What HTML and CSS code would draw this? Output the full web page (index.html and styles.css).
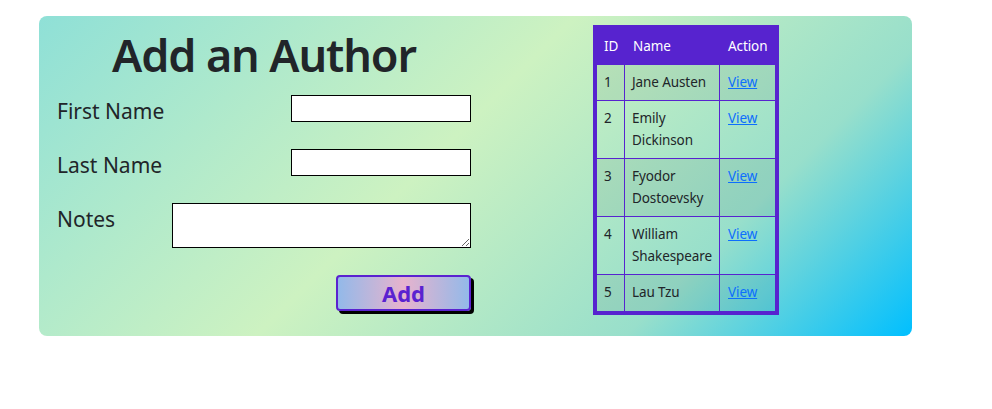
FILE: index.html
```html
<!DOCTYPE html>
<html lang="en">
<head>
<meta charset="utf-8">
<title>Add an Author</title>
<link rel="stylesheet" href="styles.css">
</head>
<body>
<div class="panel">
  <form class="author-form">
    <h1 class="title">Add an Author</h1>
    <div class="row">
      <label class="label" for="first">First Name</label>
      <input class="field" id="first" type="text">
    </div>
    <div class="row">
      <label class="label" for="last">Last Name</label>
      <input class="field" id="last" type="text">
    </div>
    <div class="row">
      <label class="label" for="notes">Notes</label>
      <textarea class="notes" id="notes"></textarea>
    </div>
    <div class="actions">
      <button class="add-btn" type="button">Add</button>
    </div>
  </form>
  <div class="table-wrap">
    <table class="authors">
      <thead>
        <tr><th class="c-id">ID</th><th class="c-name">Name</th><th class="c-act">Action</th></tr>
      </thead>
      <tbody>
        <tr class="odd"><td>1</td><td>Jane Austen</td><td><a href="#">View</a></td></tr>
        <tr><td>2</td><td>Emily Dickinson</td><td><a href="#">View</a></td></tr>
        <tr class="odd"><td>3</td><td>Fyodor Dostoevsky</td><td><a href="#">View</a></td></tr>
        <tr><td>4</td><td>William Shakespeare</td><td><a href="#">View</a></td></tr>
        <tr class="odd last"><td>5</td><td>Lau Tzu</td><td><a href="#">View</a></td></tr>
      </tbody>
    </table>
  </div>
</div>
</body>
</html>
```
FILE: styles.css
```css
html, body {
  margin: 0;
  padding: 0;
  background: #ffffff;
}
body {
  font-family: "Noto Sans", "Open Sans", sans-serif;
  color: #212529;
}
.panel {
  display: flex;
  align-items: flex-start;
  box-sizing: border-box;
  width: 873px;
  height: 320px;
  margin: 16px 0 0 39px;
  border-radius: 8px;
  background: linear-gradient(135deg, #8fe0d7 0%, #cdf2c1 45%, #98dfcb 76%, #00bfff 100%);
}
.author-form {
  width: 414px;
  margin-left: 18px;
  padding-top: 10px;
}
.title {
  margin: 0 0 12px 0;
  font-size: 45px;
  line-height: 57px;
  font-weight: 600;
  letter-spacing: -1.1px;
  text-align: center;
  color: #212529;
}
.row {
  display: flex;
  align-items: flex-start;
  justify-content: space-between;
  margin-bottom: 22px;
}
.label {
  font-size: 21px;
  line-height: 32px;
  color: #212529;
}
.field {
  box-sizing: border-box;
  width: 180px;
  height: 27px;
  margin: 0;
  border: 1px solid #000;
  border-radius: 0;
  background: #fff;
}
.notes {
  box-sizing: border-box;
  width: 299px;
  height: 45px;
  margin: 0;
  border: 1px solid #000;
  border-radius: 0;
  background: #fff;
  resize: both;
}
.actions {
  display: flex;
  justify-content: flex-end;
  margin-top: 27px;
}
.add-btn {
  box-sizing: border-box;
  width: 135px;
  height: 36px;
  padding: 0;
  border: 2px solid #5a22d0;
  border-radius: 4px;
  background: linear-gradient(90deg, #93b9e9 0%, #e7b3cd 50%, #93b9e9 100%);
  box-shadow: 3px 3px 0 #000;
  font-family: "Noto Sans", sans-serif;
  font-size: 22px;
  font-weight: 700;
  color: #5a22d0;
  line-height: 1;
}
.table-wrap {
  margin-left: 122px;
  margin-top: 9px;
}
.authors {
  box-sizing: border-box;
  border-collapse: separate;
  border-spacing: 0;
  table-layout: fixed;
  width: 186px;
  border: 4px solid #5723cf;
  font-size: 13.5px;
  line-height: 21.5px;
  letter-spacing: -0.1px;
}
.authors th {
  box-sizing: border-box;
  background: #5723cf;
  color: #ffffff;
  font-weight: 400;
  text-align: left;
  padding: 7px 4px 7px 7px;
}
.c-id { width: 28px; }
.c-name { width: 95px; }
.c-act { width: 55px; }
.authors th.c-name { padding-left: 8px; }
.authors th.c-act { padding-left: 8px; }
.authors td {
  padding: 7px 3px 7px 7px;
  vertical-align: top;
  border-right: 1px solid #5723cf;
  border-bottom: 1px solid #5723cf;
  color: #212529;
}
.authors td:last-child {
  border-right: 0;
  padding-left: 8px;
}
.authors tr.last td {
  border-bottom: 0;
}
.authors tr.odd td {
  background: rgba(0, 0, 0, 0.06);
}
.authors a {
  color: #0d6efd;
  text-decoration: underline;
}
```
